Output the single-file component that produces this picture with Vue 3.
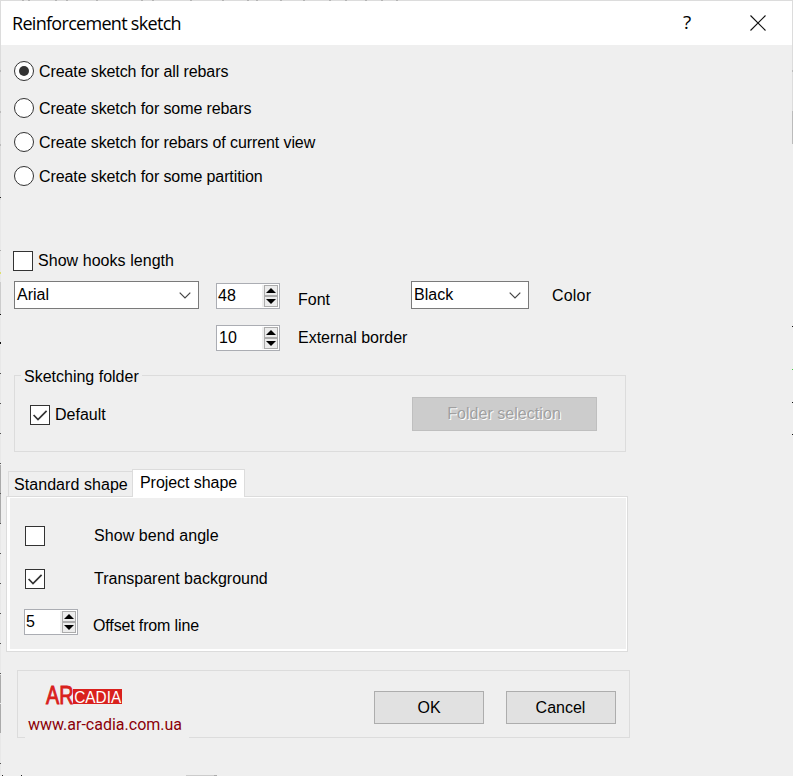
<script setup>
import { ref } from 'vue'

const modes = [
  'Create sketch for all rebars',
  'Create sketch for some rebars',
  'Create sketch for rebars of current view',
  'Create sketch for some partition',
]
const mode = ref(0)
const tabs = ['Standard shape', 'Project shape']
const tab = ref(1)

// Slivers of the drawing behind the dialog: [offset, length, colour]
const leftMarks = [
  [70, 2, '#bbb'], [111, 2, '#bbb'], [144, 2, '#bbb'], [197, 1, '#222'],
  [250, 1, '#aaa'], [272, 2, '#dde070'], [282, 32, '#ccc'], [314, 1, '#111'],
  [342, 2, '#111'], [373, 1, '#555'], [403, 1, '#555'], [433, 1, '#555'],
  [463, 1, '#555'], [465, 58, '#aaa'], [493, 1, '#555'], [523, 1, '#555'],
  [553, 1, '#555'], [583, 1, '#555'], [613, 1, '#555'], [643, 1, '#555'],
  [673, 1, '#555'], [675, 58, '#aaa'], [703, 1, '#eee'], [763, 1, '#555'],
]
const rightMarks = [
  [70, 2, '#bbb'], [111, 33, '#bbb'], [326, 1, '#111'],
  [369, 1, '#4c4'], [402, 1, '#111'], [434, 1, '#111'],
]
const topMarks = [22, 28, 55, 66, 96, 141, 152, 190, 222, 247, 256, 280, 303, 329, 345, 365, 381, 396]
</script>

<template>
  <div class="dialog">
    <svg class="edges" width="793" height="776" aria-hidden="true">
      <rect x="0" y="0" width="793" height="1" fill="#dcdcdc" />
      <rect x="0" y="0" width="1" height="200" fill="#dcdcdc" />
      <rect x="0" y="200" width="1" height="576" fill="#e8e8e8" />
      <rect x="792" y="0" width="1" height="144" fill="#dcdcdc" />
      <rect v-for="m in leftMarks" :key="'l' + m[0]" x="0" :y="m[0]" width="1" :height="m[1]" :fill="m[2]" />
      <rect v-for="m in rightMarks" :key="'r' + m[0]" x="792" :y="m[0]" width="1" :height="m[1]" :fill="m[2]" />
      <rect v-for="x in topMarks" :key="'t' + x" :x="x" y="0" width="2" height="1" fill="#b4b4b4" />
      <rect x="2" y="775" width="1" height="1" fill="#222" />
      <rect x="21" y="775" width="1" height="1" fill="#222" />
      <rect x="186" y="775" width="29" height="1" fill="#ccc" />
      <rect x="214" y="775" width="3" height="1" fill="#aaa" />
    </svg>

    <header class="titlebar">
      <h1>Reinforcement sketch</h1>
      <span class="help">?</span>
      <svg class="close" width="16" height="16" viewBox="0 0 16 16">
        <path d="M.5 .5L15.5 15.5M15.5 .5L.5 15.5" stroke="#111" stroke-width="1.1" fill="none" />
      </svg>
    </header>

    <main>
      <div class="modes">
        <div v-for="(m, i) in modes" :key="m" class="line" @click="mode = i">
          <span class="radio" :class="{ on: mode === i }"></span><span class="mode-label">{{ m }}</span>
        </div>
      </div>

      <div class="line hooks"><span class="check"></span><span>Show hooks length</span></div>

      <div class="settings">
        <div class="combo">
          <span>Arial</span>
          <svg width="12" height="7" viewBox="0 0 12 7"><path d="M.7 .7L6 6L11.3 .7" /></svg>
        </div>
        <div class="spin">
          <span>48</span>
          <div class="arrows"><i><b class="up"></b></i><i><b class="down"></b></i></div>
        </div>
        <span class="font-label">Font</span>
        <div class="combo">
          <span>Black</span>
          <svg width="12" height="7" viewBox="0 0 12 7"><path d="M.7 .7L6 6L11.3 .7" /></svg>
        </div>
        <span class="color-label">Color</span>
      </div>

      <div class="border-row">
        <div class="spin">
          <span>10</span>
          <div class="arrows"><i><b class="up"></b></i><i><b class="down"></b></i></div>
        </div>
        <span>External border</span>
      </div>

      <section class="folder">
        <span class="legend">Sketching folder</span>
        <div class="folder-body">
          <div class="line">
            <span class="check">
              <svg width="18" height="18" viewBox="0 0 18 18"><path d="M2.6 9L7 13.5L15.6 4.8" /></svg>
            </span><span>Default</span>
          </div>
          <button class="disabled">Folder selection</button>
        </div>
      </section>

      <nav class="tabs">
        <span v-for="(t, i) in tabs" :key="t" :class="{ active: tab === i }" @click="tab = i">{{ t }}</span>
      </nav>
      <section class="panel">
        <div class="option"><span class="check"></span><span>Show bend angle</span></div>
        <div class="option">
          <span class="check">
            <svg width="18" height="18" viewBox="0 0 18 18"><path d="M2.6 9L7 13.5L15.6 4.8" /></svg>
          </span><span>Transparent background</span>
        </div>
        <div class="offset">
          <div class="spin">
            <span>5</span>
            <div class="arrows"><i><b class="up"></b></i><i><b class="down"></b></i></div>
          </div>
          <span>Offset from line</span>
        </div>
      </section>

      <footer>
        <div class="brand">
          <svg class="logo" width="86" height="34" viewBox="0 0 86 34">
            <rect x="29" y="13" width="49" height="15" fill="#d9211d" />
            <text x="2" y="27.7" textLength="27.5" lengthAdjust="spacingAndGlyphs" class="ar">AR</text>
            <text x="30.2" y="26.9" textLength="47" lengthAdjust="spacingAndGlyphs" class="cadia">CADIA</text>
          </svg>
          <span class="url">www.ar-cadia.com.ua</span>
        </div>
        <button>OK</button>
        <button class="cancel">Cancel</button>
      </footer>
    </main>
  </div>
</template>

<style>
body {
  margin: 0;
  overflow: hidden;
}
</style>

<style scoped>
.dialog {
  position: relative;
  box-sizing: border-box;
  width: 793px;
  height: 776px;
  padding-top: 1px;
  background: #efefef;
  color: #000;
  font: 16px/20px "Liberation Sans", Arial, sans-serif;
}
.dialog * {
  box-sizing: border-box;
}
.dialog span {
  white-space: nowrap;
}
.edges {
  position: absolute;
  inset: 0;
  pointer-events: none;
}
.titlebar {
  display: flex;
  height: 44px;
  margin: 0 1px;
  padding: 0 26px 0 11px;
  background: #fff;
}
h1 {
  flex: 1;
  margin: 0;
  font: 400 18px/44px "Open Sans", "Noto Sans", sans-serif;
  letter-spacing: -0.7px;
}
.help {
  width: 10px;
  margin-right: 57px;
  font: 19px/43px "Open Sans", sans-serif;
}
.close {
  margin-top: 14px;
}
.modes {
  display: flex;
  flex-direction: column;
  gap: 14px;
  padding: 16px 0 0 14px;
}
.modes .line:first-child {
  margin-bottom: 3px;
}
.mode-label {
  padding-top: 1px;
  letter-spacing: -0.1px;
}
.line {
  display: flex;
  gap: 5px;
  height: 20px;
}
.radio {
  display: grid;
  place-items: center;
  width: 20px;
  height: 20px;
  border: 1px solid #333;
  border-radius: 50%;
  background: #fff;
}
.radio.on::after {
  content: "";
  width: 10px;
  height: 10px;
  border-radius: 50%;
  background: #333;
}
.check {
  width: 20px;
  height: 20px;
  border: 1px solid #333;
  background: #fff;
}
.check svg {
  display: block;
}
.check path {
  fill: none;
  stroke: #333;
  stroke-width: 1.7;
}
.hooks {
  margin: 65px 0 0 13px;
  letter-spacing: 0.05px;
}
.settings {
  display: grid;
  grid-template-columns: 185px 64px 97px 118px 60px;
  column-gap: 17px;
  height: 28px;
  margin: 10px 0 0 14px;
}
.combo {
  display: flex;
  justify-content: space-between;
  height: 28px;
  padding: 3px 7px 0 2px;
  border: 1px solid #7a7a7a;
  background: #fff;
}
.combo svg {
  margin-top: 7px;
}
.combo path {
  fill: none;
  stroke: #444;
  stroke-width: 1.2;
}
.font-label {
  padding: 9px 0 0 1px;
}
.color-label {
  padding: 5px 0 0 6px;
  letter-spacing: 0.2px;
}
.spin {
  display: flex;
  justify-content: space-between;
  width: 64px;
  height: 26px;
  padding: 1px;
  border: 1px solid #abadb3;
  background: #fff;
}
.settings .spin {
  margin-top: 2px;
}
.spin > span {
  padding: 1px 0 0 0;
}
.arrows {
  display: flex;
  flex-direction: column;
  width: 16px;
  padding: 0 0 0 2px;
  background: #efefef;
}
.arrows i {
  display: grid;
  place-items: center;
  width: 14px;
  height: 11px;
  border: 1px solid #acacac;
  background: #ececec;
}
.up,
.down {
  width: 10px;
  height: 5px;
  background: #000;
}
.up {
  clip-path: polygon(50% 0, 100% 100%, 0 100%);
}
.down {
  clip-path: polygon(0 0, 100% 0, 50% 100%);
}
.border-row {
  display: flex;
  gap: 18px;
  margin: 16px 0 0 216px;
}
.border-row > span {
  padding-top: 3px;
}
.border-row .spin > span {
  padding-left: 1px;
}
.folder {
  display: flex;
  flex-direction: column;
  width: 612px;
  height: 77px;
  margin: 24px 0 0 14px;
  border: 1px solid #dcdcdc;
}
.legend {
  align-self: flex-start;
  margin: -9px 0 0 6px;
  padding: 0 3px;
  background: #efefef;
}
.folder-body {
  display: flex;
  justify-content: space-between;
  padding: 10px 28px 0 15px;
}
.folder-body .line {
  margin-top: 8px;
}
button {
  width: 110px;
  height: 33px;
  margin: 0;
  padding: 0;
  border: 1px solid #adadad;
  background: #e1e1e1;
  color: #000;
  font: 16px/20px "Liberation Sans", Arial, sans-serif;
}
.disabled {
  width: 185px;
  height: 34px;
  padding-right: 1px;
  border-color: #bfbfbf;
  background: #ccc;
  color: #a0a0a0;
  letter-spacing: 0.05px;
  text-shadow: 1px 1px 0 #fff;
}
.tabs {
  display: flex;
  align-items: flex-end;
  height: 28px;
  margin: 17px 0 0 8px;
}
.tabs span {
  width: 124px;
  height: 26px;
  padding: 3px 0 0 5px;
  border: 1px solid #dcdcdc;
  border-width: 1px 0 0 1px;
  letter-spacing: 0.06px;
}
.tabs .active {
  z-index: 1;
  width: 113px;
  height: 28px;
  padding: 3px 0 0 7px;
  border-width: 1px 1px 0 1px;
  background: #fff;
  letter-spacing: -0.06px;
}
.panel {
  width: 622px;
  height: 156px;
  margin: -1px 0 0 6px;
  padding: 28px 0 0 14px;
  border: 1px solid #dcdcdc;
  box-shadow: inset 3px 1px #fff, inset -1px -2px #fff;
}
.option {
  display: flex;
  gap: 49px;
  height: 20px;
  margin: 1px 0 22px 4px;
  letter-spacing: 0.07px;
}
.option + .option {
  margin: 23px 0 20px 4px;
  letter-spacing: 0;
}
.offset {
  display: flex;
  gap: 15px;
  margin-left: 3px;
}
.offset .spin {
  width: 54px;
}
.offset > span {
  padding-top: 7px;
  letter-spacing: -0.14px;
}
footer {
  display: flex;
  width: 613px;
  height: 68px;
  margin: 18px 0 0 17px;
  padding: 20px 13px 0 7px;
  border: 1px solid #dcdcdc;
}
.cancel {
  margin-left: 22px;
  padding-right: 1px;
}
.brand {
  display: flex;
  flex-direction: column;
  width: 164px;
  height: 62px;
  margin: -15px 185px 0 0;
  padding-left: 3px;
  background: #efefef;
}
.logo {
  display: block;
  margin-left: 16px;
}
.ar {
  fill: #d9211d;
  stroke: #d9211d;
  stroke-width: 0.9;
  font-size: 25px;
}
.cadia {
  fill: #fff;
  font-size: 17px;
}
.url {
  margin-top: 5px;
  color: #8b0008;
  font: 16px/20px Roboto, sans-serif;
}
</style>
